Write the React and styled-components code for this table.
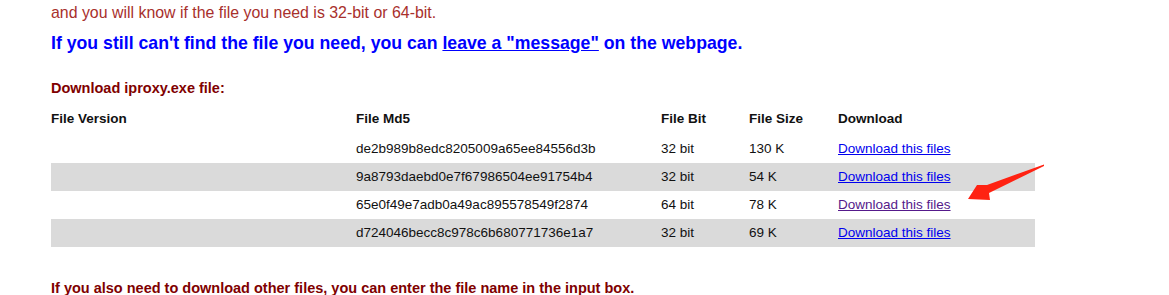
import styled, { createGlobalStyle } from "styled-components";

const Global = createGlobalStyle`
  body {
    margin: 0;
    background: #ffffff;
    font-family: "Liberation Sans", Arial, sans-serif;
  }
`;

const files = [
  { md5: "de2b989b8edc8205009a65ee84556d3b", bit: "32 bit", size: "130 K" },
  { md5: "9a8793daebd0e7f67986504ee91754b4", bit: "32 bit", size: "54 K" },
  { md5: "65e0f49e7adb0a49ac895578549f2874", bit: "64 bit", size: "78 K", visited: true },
  { md5: "d724046becc8c978c6b680771736e1a7", bit: "32 bit", size: "69 K" },
];

export default function App() {
  return (
    <>
      <Global />
      <Page>
        <Note>and you will know if the file you need is 32-bit or 64-bit.</Note>
        <Heading>
          If you still can't find the file you need, you can <a href="#">leave a "message"</a> on the webpage.
        </Heading>
        <SectionTitle>Download iproxy.exe file:</SectionTitle>
        <TableWrap>
          <Table>
            <thead>
              <tr>
                <Th $w={305}>File Version</Th>
                <Th $w={305}>File Md5</Th>
                <Th $w={88}>File Bit</Th>
                <Th $w={89}>File Size</Th>
                <Th>Download</Th>
              </tr>
            </thead>
            <tbody>
              {files.map((f, i) => (
                <Row key={f.md5} $shaded={i % 2 === 1}>
                  <Td></Td>
                  <Td>{f.md5}</Td>
                  <Td>{f.bit}</Td>
                  <Td>{f.size}</Td>
                  <Td>
                    <FileLink href="#" $visited={f.visited}>Download this files</FileLink>
                  </Td>
                </Row>
              ))}
            </tbody>
          </Table>
          {/* red pointer toward the 64 bit download */}
          <Arrow width="80" height="40" viewBox="0 0 80 40">
            <path d="M79 0.5 L22 21 L12 21 L3 35 L25 36 L24 29 L79 2 Z" fill="#ff2212" />
          </Arrow>
        </TableWrap>
        <Footer>If you also need to download other files, you can enter the file name in the input box.</Footer>
      </Page>
    </>
  );
}

const Page = styled.div`
  padding: 0 51px;
  width: 1169px;
  height: 295px;
  box-sizing: border-box;
  overflow: hidden;
`;

const Note = styled.p`
  margin: 0;
  padding-top: 4px;
  font-size: 15.9px;
  line-height: 18px;
  color: #a8302c;
`;

const Heading = styled.h2`
  margin: 9px 0 0;
  font-size: 17.7px;
  line-height: 24px;
  font-weight: bold;
  color: #0000ff;
  a {
    color: #0000ff;
    text-decoration: underline;
  }
`;

const SectionTitle = styled.h3`
  margin: 24px 0 0;
  font-size: 14.5px;
  line-height: 18px;
  font-weight: bold;
  color: #800000;
`;

const TableWrap = styled.div`
  position: relative;
  margin-top: 10px;
  width: 984px;
`;

const Table = styled.table`
  width: 984px;
  border-collapse: collapse;
  font-size: 13.5px;
  color: #111111;
`;

const Th = styled.th`
  text-align: left;
  font-weight: bold;
  height: 22px;
  padding: 0 0 6px;
  vertical-align: middle;
  width: ${(p) => (p.$w ? `${p.$w}px` : "auto")};
`;

const Row = styled.tr`
  background: ${(p) => (p.$shaded ? "#dadada" : "transparent")};
`;

const Td = styled.td`
  height: 26px;
  padding: 0 0 2px;
  vertical-align: middle;
`;

const FileLink = styled.a`
  color: ${(p) => (p.$visited ? "#551a8b" : "#0000ee")};
  text-decoration: underline;
`;

const Arrow = styled.svg`
  position: absolute;
  left: 914px;
  top: 57px;
`;

const Footer = styled.p`
  margin: 33px 0 0;
  font-size: 14.5px;
  line-height: 16px;
  font-weight: bold;
  color: #800000;
`;
